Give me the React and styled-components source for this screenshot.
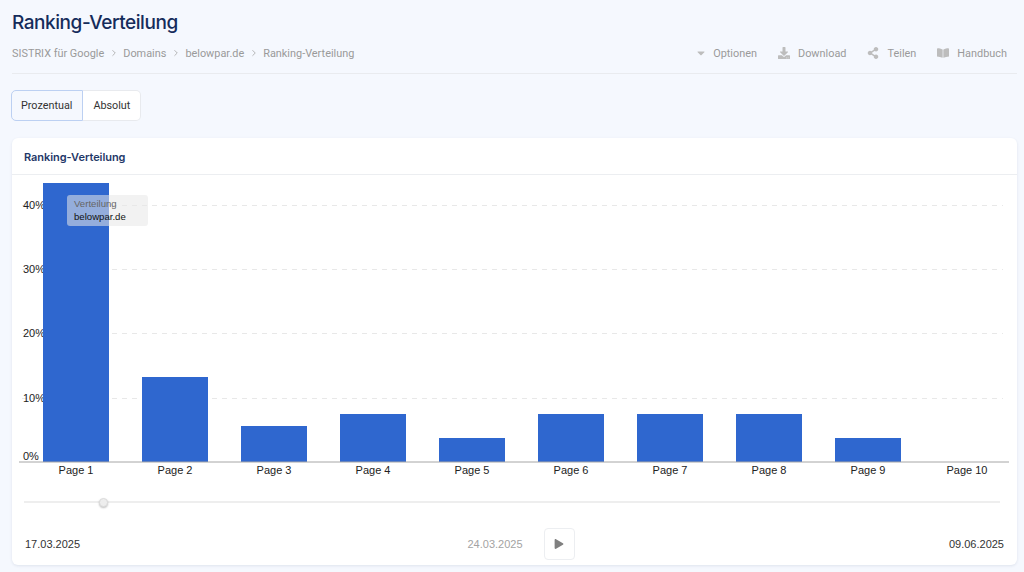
import styled, { createGlobalStyle } from "styled-components";
import { FaCaretDown, FaPlay, FaDownload, FaShareAlt, FaBookOpen } from "react-icons/fa";
import { ChevronRight } from "lucide-react";

const GlobalStyle = createGlobalStyle`
  html, body {
    margin: 0;
    background: #f5f8fe;
    font-family: Roboto, "Liberation Sans", sans-serif;
  }
  * { box-sizing: border-box; }
`;

const Page = styled.div`
  width: 1024px;
  height: 572px;
  padding: 0 7px 0 12px;
  overflow: hidden;
`;

const Title = styled.h1`
  margin: 0;
  padding-top: 10px;
  height: 37px;
  font-family: Inter, sans-serif;
  font-size: 19px;
  line-height: 25px;
  font-weight: 500;
  letter-spacing: -0.45px;
  color: #152c5b;
`;

const HeaderRow = styled.div`
  display: flex;
  justify-content: space-between;
  align-items: center;
  height: 37px;
  padding-bottom: 4px;
  border-bottom: 1px solid #e9ebef;
  font-size: 10.9px;
  color: #9a9a9a;
`;

const Crumbs = styled.div`
  display: flex;
  align-items: center;
  gap: 4.5px;
  svg { color: #a8a8a8; }
`;

const Actions = styled.div`
  display: flex;
  align-items: center;
  gap: 21px;
  padding-right: 10px;
`;

const Action = styled.span`
  display: flex;
  align-items: center;
  gap: ${(p) => p.$gap || 8}px;
  svg { color: #bdbdbd; font-size: 12px; }
`;

const Toggle = styled.div`
  display: inline-flex;
  margin: 16px 0 0 -1px;
  height: 31px;
  vertical-align: top;
`;

const ToggleBtn = styled.div`
  display: flex;
  align-items: center;
  padding: 0 10px 0 ${(p) => (p.$active ? 9 : 10)}px;
  font-size: 10.8px;
  color: #333;
  background: ${(p) => (p.$active ? "#f5f8fe" : "#fff")};
  border: 1px solid ${(p) => (p.$active ? "#bcd0f2" : "#e8eaee")};
  border-left-width: ${(p) => (p.$active ? 1 : 0)}px;
  border-radius: ${(p) => (p.$active ? "5px 0 0 5px" : "0 5px 5px 0")};
`;

const Card = styled.section`
  margin-top: 17px;
  width: 1005px;
  height: 427px;
  background: #fff;
  border-radius: 6px;
  box-shadow: 0 1px 3px rgba(30, 50, 90, 0.1);
`;

const CardHead = styled.div`
  height: 37px;
  padding: 12px 12px 0;
  border-bottom: 1px solid #eceef1;
  font-family: Inter, sans-serif;
  font-size: 11px;
  line-height: 14px;
  font-weight: 600;
  letter-spacing: -0.05px;
  color: #1f3868;
`;

const ChartWrap = styled.div`
  position: relative;
  height: 315px;
`;

const Tooltip = styled.div`
  position: absolute;
  left: 55px;
  top: 20px;
  width: 81px;
  height: 31px;
  padding: 3px 7px;
  border-radius: 3px;
  background: rgba(232, 232, 232, 0.55);
  font-family: "Liberation Sans", sans-serif;
  font-size: 9.6px;
  line-height: 12.5px;
  color: #111;
`;

const TooltipLabel = styled.div`
  color: #666;
`;

const Timeline = styled.div`
  padding: 0 17px 0 12px;
  height: 24px;
  display: flex;
  align-items: center;
`;

const Track = styled.div`
  position: relative;
  flex: 1;
  height: 2px;
  background: #eee;
`;

const Thumb = styled.div`
  position: absolute;
  left: 75px;
  top: -3px;
  width: 9px;
  height: 9px;
  border-radius: 50%;
  background: #ededed;
  border: 1px solid #dcdcdc;
  box-shadow: 0 1px 2px rgba(0, 0, 0, 0.25);
`;

const Footer = styled.div`
  display: grid;
  grid-template-columns: 1fr auto 1fr;
  align-items: center;
  padding: 14px 13px 0 13px;
  font-family: "Liberation Sans", sans-serif;
  font-size: 11px;
  color: #333;
`;

const Current = styled.div`
  display: flex;
  align-items: center;
  gap: 21px;
  margin-left: 13px;
  color: #a3a3a3;
`;

const PlayBtn = styled.div`
  display: flex;
  align-items: center;
  justify-content: center;
  width: 31px;
  height: 32px;
  border: 1px solid #eceef1;
  border-radius: 4px;
  color: #808080;
  font-size: 10px;
`;

const EndDate = styled.div`
  text-align: right;
`;

const chartFont = { fontFamily: "Liberation Sans, sans-serif", fontSize: 11, fill: "#222" };

const bars = [
  ["Page 1", 183],
  ["Page 2", 377],
  ["Page 3", 426],
  ["Page 4", 414],
  ["Page 5", 438],
  ["Page 6", 414],
  ["Page 7", 414],
  ["Page 8", 414],
  ["Page 9", 438],
  ["Page 10", 462],
];

const grid = [
  ["40%", 205],
  ["30%", 269],
  ["20%", 333],
  ["10%", 398],
];

// chart coordinates are page pixels moved by the chart's own origin
const OX = 12;
const OY = 175;

function Chart() {
  return (
    <svg width="1005" height="315" style={{ display: "block" }}>
      {grid.map(([label, y]) => (
        <g key={label}>
          <line x1={22 - OX} x2={1003 - OX} y1={y - OY + 0.5} y2={y - OY + 0.5} stroke="#e8e8e8" strokeDasharray="5 5" />
          <text x={23 - OX} y={y - OY + 4} {...chartFont}>{label}</text>
        </g>
      ))}
      <text x={23 - OX} y={460 - OY} {...chartFont}>0%</text>
      {bars.map(([label, top], i) => (
        <g key={label}>
          <rect x={43 + i * 99 - OX} y={top - OY} width="66" height={462 - top} fill="#2f67cf" />
          <text x={76 + i * 99 - OX} y={474 - OY} textAnchor="middle" {...chartFont}>{label}</text>
        </g>
      ))}
      <line x1={19 - OX} x2={1009 - OX} y1={462 - OY} y2={462 - OY} stroke="#a6a6a6" />
    </svg>
  );
}

export default function App() {
  return (
    <Page>
      <GlobalStyle />
      <Title>Ranking-Verteilung</Title>
      <HeaderRow>
        <Crumbs>
          <span>SISTRIX für Google</span>
          <ChevronRight size={10} />
          <span>Domains</span>
          <ChevronRight size={10} />
          <span>belowpar.de</span>
          <ChevronRight size={10} />
          <span>Ranking-Verteilung</span>
        </Crumbs>
        <Actions>
          <Action $gap={6}><FaCaretDown />Optionen</Action>
          <Action><FaDownload />Download</Action>
          <Action><FaShareAlt />Teilen</Action>
          <Action><FaBookOpen />Handbuch</Action>
        </Actions>
      </HeaderRow>
      <Toggle>
        <ToggleBtn $active>Prozentual</ToggleBtn>
        <ToggleBtn>Absolut</ToggleBtn>
      </Toggle>
      <Card>
        <CardHead>Ranking-Verteilung</CardHead>
        <ChartWrap>
          <Chart />
          <Tooltip>
            <TooltipLabel>Verteilung</TooltipLabel>
            belowpar.de
          </Tooltip>
        </ChartWrap>
        <Timeline>
          <Track><Thumb /></Track>
        </Timeline>
        <Footer>
          <div>17.03.2025</div>
          <Current>
            <span>24.03.2025</span>
            <PlayBtn><FaPlay /></PlayBtn>
          </Current>
          <EndDate>09.06.2025</EndDate>
        </Footer>
      </Card>
    </Page>
  );
}
